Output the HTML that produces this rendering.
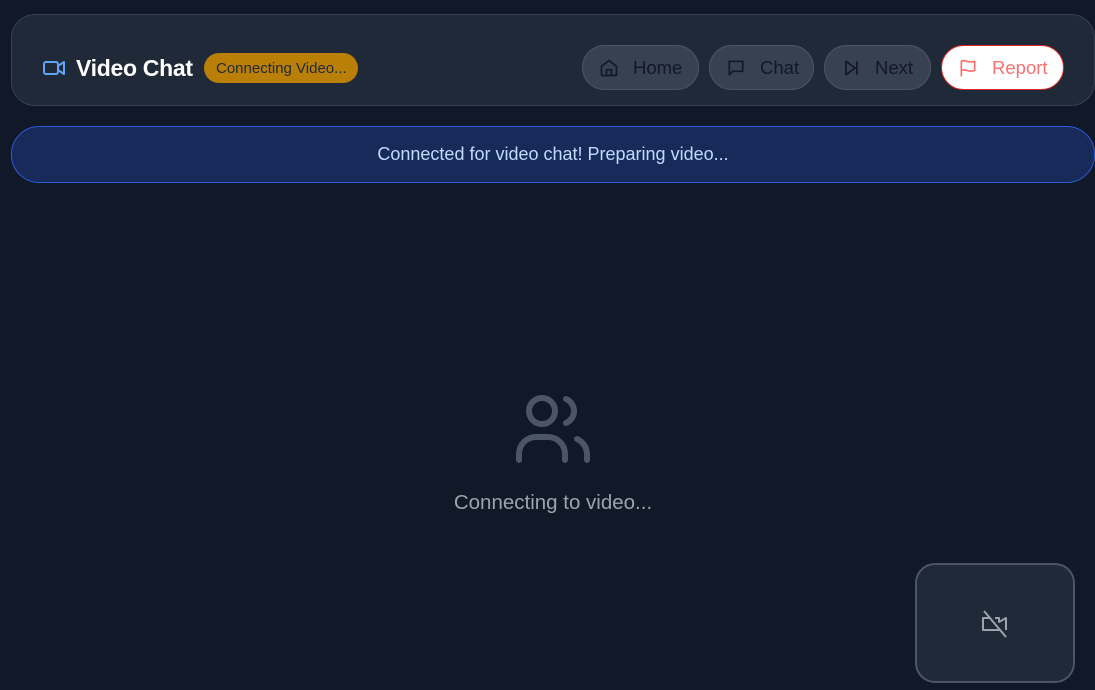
<!DOCTYPE html>
<html><head><meta charset="utf-8"><style>
*{box-sizing:border-box;margin:0;padding:0}
body{width:1095px;height:690px;overflow:hidden;background:#111827;font-family:"Liberation Sans","Noto Sans CJK SC",sans-serif;position:relative}
.hdr{position:absolute;left:11px;top:14px;width:1084px;height:92px;background:#1f2937;border:1px solid #374151;border-radius:24px}
.title{position:absolute;left:42px;top:52px;height:32px;width:400px}
.title svg{position:absolute;left:0;top:4px}
.title h1{position:absolute;left:34px;top:0;line-height:32px;color:#fff;font-size:23px;font-weight:bold;letter-spacing:-0.3px}
.badge{position:absolute;left:162px;top:1px;background:#b97f06;border-radius:15px;height:30px;width:154px}
.badge span{position:absolute;left:12px;top:7px;color:#1f2937;font-size:15px;line-height:17px;white-space:nowrap}
.btn{position:absolute;top:45px;height:45px;border-radius:23px;background:#374151;border:1px solid #4b5563;color:#111827;font-size:18.5px;display:flex;align-items:center;padding-left:16px}
.btn span{margin-left:14px}
.rep{background:#fff;border:1px solid #dc2626;color:#f87171}
.ban{position:absolute;left:11px;top:126px;width:1084px;height:57px;background:#172a5a;border:1px solid #2c5bd6;border-radius:28px;color:#bfdbfe;font-size:18px;text-align:center;line-height:55px}
.conn{position:absolute;left:0;width:1106px;top:491px;text-align:center;color:#9ca3af;font-size:20.5px}
.self{position:absolute;left:915px;top:563px;width:160px;height:120px;background:#1f2937;border:2px solid #4b5563;border-radius:20px}
</style></head><body>
<div class="hdr"></div>
<div class="title">
<svg width="24" height="24" viewBox="0 0 24 24" fill="none" stroke="#60a5fa" stroke-width="2" stroke-linejoin="round"><rect x="2" y="6" width="14" height="12" rx="2"/><path d="M16 10l6-4v12l-6-4z"/></svg>
<h1>Video Chat</h1><div class="badge"><span>Connecting Video...</span></div></div>
<div class="btn" style="left:582px;width:117px"><svg width="20" height="20" viewBox="0 0 24 24" fill="none" stroke="#111827" stroke-width="2" stroke-linejoin="round"><path d="M3 10l9-7 9 7v10a1 1 0 0 1-1 1H4a1 1 0 0 1-1-1z"/><path d="M9 21v-7h6v7"/></svg><span>Home</span></div>
<div class="btn" style="left:709px;width:105px"><svg width="20" height="20" viewBox="0 0 24 24" fill="none" stroke="#111827" stroke-width="2" stroke-linejoin="round"><path d="M4 4h16v12H8l-4 4z"/></svg><span>Chat</span></div>
<div class="btn" style="left:824px;width:107px"><svg width="20" height="20" viewBox="0 0 24 24" fill="none" stroke="#111827" stroke-width="2" stroke-linejoin="round"><path d="M6 4l11 8-11 8z"/><path d="M19 4v16"/></svg><span>Next</span></div>
<div class="btn rep" style="left:941px;width:123px"><svg width="20" height="20" viewBox="0 0 24 24" fill="none" stroke="#f87171" stroke-width="2" stroke-linejoin="round"><path d="M4 22V4c4-3 8 3 16 0v11c-8 3-12-3-16 0"/></svg><span>Report</span></div>
<div class="ban">Connected for video chat! Preparing video...</div>
<svg style="position:absolute;left:514px;top:394px" width="78" height="70" viewBox="0 0 78 70" fill="none" stroke="#4b5563" stroke-width="6" stroke-linecap="round"><circle cx="28" cy="17" r="13"/><path d="M5 66v-6a17 17 0 0 1 17-17h12a17 17 0 0 1 17 17v6"/><path d="M52 5a13 13 0 0 1 0 24"/><path d="M73 66v-6a17 17 0 0 0-10-15"/></svg>
<div class="conn">Connecting to video...</div>
<div class="self"><svg style="position:absolute;left:63px;top:44px" width="30" height="30" viewBox="0 0 30 30" fill="none" stroke="#9ca3af" stroke-width="2" stroke-linejoin="round"><path d="M10 9H3v12h16v-2"/><path d="M15 9h4v4l7-4v12"/><path d="M4 2l22 26"/></svg></div>
</body></html>
